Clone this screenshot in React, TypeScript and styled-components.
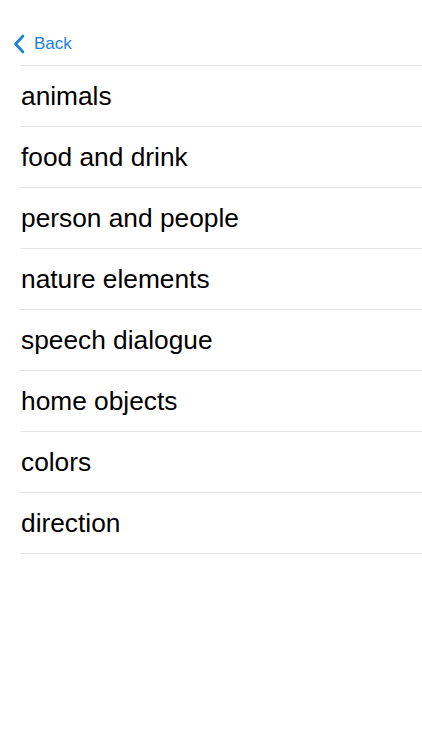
import React from "react";
import styled, { createGlobalStyle } from "styled-components";

const categories = [
  "animals",
  "food and drink",
  "person and people",
  "nature elements",
  "speech dialogue",
  "home objects",
  "colors",
  "direction",
];

const App = () => {
  return (
    <>
      <GlobalStyle />
      <Screen>
        <NavBar>
          <BackButton>
            <svg width="12" height="20" viewBox="0 0 12 20">
              <path
                d="M10 2 L2.5 10 L10 18"
                fill="none"
                stroke="#1b7fe0"
                strokeWidth="2.6"
                strokeLinecap="round"
                strokeLinejoin="round"
              />
            </svg>
            <span>Back</span>
          </BackButton>
        </NavBar>
        <List>
          {categories.map((name) => (
            <Row key={name}>{name}</Row>
          ))}
        </List>
      </Screen>
    </>
  );
};

export default App;

const GlobalStyle = createGlobalStyle`
  html, body {
    margin: 0;
    padding: 0;
    background: #ffffff;
  }
  body {
    font-family: "Liberation Sans", Arial, sans-serif;
  }
`;

const Screen = styled.div`
  width: 422px;
  height: 750px;
  background: #ffffff;
`;

const NavBar = styled.div`
  height: 65px;
  box-sizing: border-box;
  padding: 23px 0 0 13px;
  display: flex;
  align-items: center;
`;

const BackButton = styled.div`
  display: flex;
  align-items: center;
  gap: 9px;
  height: 36px;
  color: #1b7fe0;
  font-size: 17px;
  cursor: pointer;
  svg {
    display: block;
  }
`;

const List = styled.div`
  margin-left: 20px;
  border-top: 1px solid #e6e6e6;
`;

const Row = styled.div`
  height: 60px;
  display: flex;
  align-items: center;
  padding-left: 1px;
  border-bottom: 1px solid #e6e6e6;
  font-size: 26.3px;
  color: #000000;
`;
